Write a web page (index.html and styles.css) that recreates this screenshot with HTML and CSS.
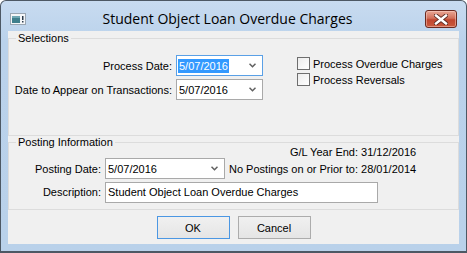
FILE: index.html
```html
<!DOCTYPE html>
<html>
<head>
<meta charset="utf-8">
<title>Student Object Loan Overdue Charges</title>
<link rel="stylesheet" href="styles.css">
</head>
<body>
<div class="window">
  <div class="titlebar">
    <svg class="app-icon" width="16" height="12" viewBox="0 0 16 12">
      <rect x="0.5" y="0.5" width="15" height="11" fill="#f4f6f8" stroke="#9aa6b2"/>
      <rect x="2" y="3" width="8" height="7" fill="#3f7f8c"/>
      <rect x="2" y="3" width="8" height="2" fill="#6fa7b3"/>
      <rect x="12" y="3" width="1.5" height="4" fill="#2a3a4a"/>
      <rect x="12" y="8" width="1.5" height="1.5" fill="#2a3a4a"/>
    </svg>
    <div class="title">Student Object Loan Overdue Charges</div>
    <div class="close-btn">
      <svg width="14" height="11" viewBox="0 0 14 11">
        <path d="M2 1.5 L12 9.5 M12 1.5 L2 9.5" stroke="#5a2a22" stroke-width="4.2" stroke-linecap="square"/>
        <path d="M2 1.5 L12 9.5 M12 1.5 L2 9.5" stroke="#ffffff" stroke-width="2.4" stroke-linecap="square"/>
      </svg>
    </div>
  </div>

  <div class="client">
    <div class="group selections">
      <span class="group-title">Selections</span>
      <div class="sel-body">
        <div class="sel-grid">
          <span class="lbl">Process Date:</span>
          <div class="combo focused sel-combo">
            <span class="combo-text"><span class="hl">5/07/2016</span></span>
            <svg class="chev" width="7" height="5" viewBox="0 0 7 5"><polyline points="0.5,0.8 3.5,3.8 6.5,0.8" fill="none" stroke="#606060" stroke-width="1.5"/></svg>
          </div>
          <span class="lbl">Date to Appear on Transactions:</span>
          <div class="combo sel-combo">
            <span class="combo-text">5/07/2016</span>
            <svg class="chev" width="7" height="5" viewBox="0 0 7 5"><polyline points="0.5,0.8 3.5,3.8 6.5,0.8" fill="none" stroke="#606060" stroke-width="1.5"/></svg>
          </div>
        </div>
        <div class="checks">
          <div class="check"><span class="box"></span><span>Process Overdue Charges</span></div>
          <div class="check"><span class="box"></span><span>Process Reversals</span></div>
        </div>
      </div>
    </div>

    <div class="group posting">
      <span class="group-title">Posting Information</span>
      <div class="post-grid">
        <span class="gl">G/L Year End: 31/12/2016</span>
        <span class="lbl lbl-posting">Posting Date:</span>
        <div class="combo post-combo">
          <span class="combo-text">5/07/2016</span>
          <svg class="chev" width="7" height="5" viewBox="0 0 7 5"><polyline points="0.5,0.8 3.5,3.8 6.5,0.8" fill="none" stroke="#606060" stroke-width="1.5"/></svg>
        </div>
        <span class="note">No Postings on or Prior to: 28/01/2014</span>
        <span class="lbl lbl-desc">Description:</span>
        <div class="textbox">Student Object Loan Overdue Charges</div>
      </div>
    </div>

    <div class="buttons">
      <div class="btn default">OK</div>
      <div class="btn">Cancel</div>
    </div>
  </div>
</div>
</body>
</html>
```

FILE: styles.css
```css
html, body {
  margin: 0;
  padding: 0;
  background: #ffffff;
}

body {
  width: 467px;
  height: 253px;
  overflow: hidden;
  font-family: "Liberation Sans", Arial, sans-serif;
  font-size: 11px;
  color: #000000;
}

.window {
  box-sizing: border-box;
  width: 467px;
  height: 253px;
  border: 1px solid #4d5864;
  border-bottom-width: 2px;
  border-radius: 6px 6px 0 0;
  background: linear-gradient(#c8dbf0, #bad2eb 40px, #b9d1ea);
  padding: 0 7px 7px 7px;
  display: flex;
  flex-direction: column;
}

.titlebar {
  height: 30px;
  display: flex;
  align-items: flex-start;
}

.app-icon {
  margin-top: 12px;
  margin-left: 2px;
  flex: none;
}

.title {
  flex: 1;
  text-align: center;
  font-family: "Open Sans", "Noto Sans", sans-serif;
  font-size: 14px;
  line-height: 20px;
  margin-top: 8px;
  color: #000000;
  padding-left: 4px;
}

.close-btn {
  flex: none;
  margin-top: 9px;
  margin-right: 2px;
  box-sizing: border-box;
  width: 32px;
  height: 18px;
  border: 1px solid #6b2a20;
  border-radius: 3px;
  background: linear-gradient(#e9a795, #d2705b 45%, #c0462f 55%, #c95a3d);
  display: flex;
  align-items: center;
  justify-content: center;
  box-shadow: inset 0 0 0 1px rgba(255, 220, 210, 0.45);
}

.client {
  flex: 1;
  background: #f0f0f0;
  padding-top: 7px;
  display: flex;
  flex-direction: column;
}

.group {
  position: relative;
  border: 1px solid #dcdcdc;
}

.group-title {
  position: absolute;
  top: -7px;
  left: 7px;
  padding: 0 2px;
  line-height: 13px;
  background: #f0f0f0;
}

.selections {
  height: 98px;
  box-sizing: border-box;
  padding-top: 16px;
}

.sel-body {
  display: flex;
  align-items: flex-start;
}

.sel-grid {
  display: grid;
  grid-template-columns: 163px 87px;
  column-gap: 4px;
  row-gap: 3px;
  align-items: center;
}

.lbl {
  text-align: right;
  white-space: nowrap;
}

.combo {
  box-sizing: border-box;
  height: 21px;
  background: #ffffff;
  border: 1px solid #a9a9a9;
  display: flex;
  align-items: center;
  padding-left: 1px;
  padding-right: 6px;
}

.combo.focused {
  border-color: #5aa0e6;
}

.combo-text {
  flex: 1;
  padding-left: 1px;
  line-height: 14px;
  white-space: nowrap;
}

.combo-text .hl {
  background: #3399ff;
  color: #ffffff;
  padding: 0 1px;
  margin-left: -1px;
  display: inline-block;
}

.chev {
  flex: none;
}

.checks {
  margin-left: 34px;
  margin-top: 2px;
  display: flex;
  flex-direction: column;
  gap: 3px;
}

.check {
  display: flex;
  align-items: center;
  gap: 3px;
  height: 13px;
  white-space: nowrap;
}

.box {
  box-sizing: border-box;
  width: 13px;
  height: 13px;
  border: 1px solid #6e6e6e;
  background: linear-gradient(135deg, #ececec, #ffffff);
  flex: none;
}

.posting {
  margin-top: 6px;
  height: 68px;
  box-sizing: border-box;
  padding-top: 3px;
}

.post-grid {
  display: grid;
  grid-template-columns: 92px 120px auto;
  grid-template-rows: 12px 21px 24px;
  column-gap: 4px;
  align-items: center;
  justify-content: start;
}

.gl {
  grid-column: 3;
  grid-row: 1;
  text-align: right;
  line-height: 12px;
  white-space: nowrap;
}

.lbl-posting {
  grid-column: 1;
  grid-row: 2;
}

.post-combo {
  grid-column: 2;
  grid-row: 2;
}

.note {
  grid-column: 3;
  grid-row: 2;
  white-space: nowrap;
}

.lbl-desc {
  grid-column: 1;
  grid-row: 3;
  align-self: end;
  line-height: 21px;
}

.textbox {
  grid-column: 2 / 4;
  grid-row: 3;
  align-self: end;
  box-sizing: border-box;
  width: 273px;
  height: 21px;
  background: #ffffff;
  border: 1px solid #a9a9a9;
  padding-left: 2px;
  line-height: 19px;
  white-space: nowrap;
}

.buttons {
  margin-top: 6px;
  display: flex;
  justify-content: center;
  gap: 8px;
}

.btn {
  box-sizing: border-box;
  width: 73px;
  height: 23px;
  border: 1px solid #acacac;
  background: linear-gradient(#f0f0f0, #e5e5e5);
  display: flex;
  align-items: center;
  justify-content: center;
}

.btn.default {
  border-color: #4b97e3;
}
```
